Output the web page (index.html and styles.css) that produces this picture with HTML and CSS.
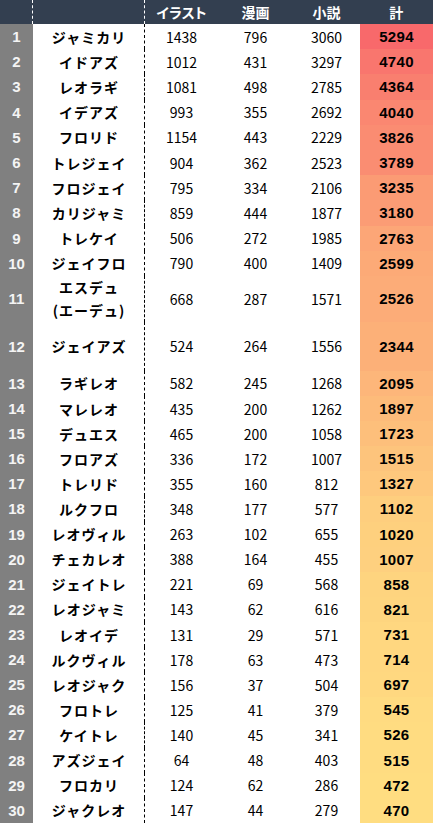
FILE: index.html
```html
<!DOCTYPE html>
<html lang="ja">
<head>
<meta charset="utf-8">
<title>ランキング</title>
<link rel="stylesheet" href="styles.css">
</head>
<body>
<div class="table">
  <div class="row head">
    <div class="c no"></div>
    <div class="c name"></div>
    <div class="c num palt">イラスト</div>
    <div class="c num">漫画</div>
    <div class="c num">小説</div>
    <div class="c tot">計</div>
  </div>
  <div class="row a"><div class="c no">1</div><div class="c name">ジャミカリ</div><div class="c num">1438</div><div class="c num">796</div><div class="c num">3060</div><div class="c tot" style="background:rgb(248,105,107)">5294</div></div>
  <div class="row a"><div class="c no">2</div><div class="c name">イドアズ</div><div class="c num">1012</div><div class="c num">431</div><div class="c num">3297</div><div class="c tot" style="background:rgb(249,118,110)">4740</div></div>
  <div class="row a"><div class="c no">3</div><div class="c name">レオラギ</div><div class="c num">1081</div><div class="c num">498</div><div class="c num">2785</div><div class="c tot" style="background:rgb(249,127,111)">4364</div></div>
  <div class="row a"><div class="c no">4</div><div class="c name">イデアズ</div><div class="c num">993</div><div class="c num">355</div><div class="c num">2692</div><div class="c tot" style="background:rgb(250,135,113)">4040</div></div>
  <div class="row a"><div class="c no">5</div><div class="c name">フロリド</div><div class="c num">1154</div><div class="c num">443</div><div class="c num">2229</div><div class="c tot" style="background:rgb(250,140,114)">3826</div></div>
  <div class="row a"><div class="c no">6</div><div class="c name">トレジェイ</div><div class="c num">904</div><div class="c num">362</div><div class="c num">2523</div><div class="c tot" style="background:rgb(250,141,114)">3789</div></div>
  <div class="row a"><div class="c no">7</div><div class="c name">フロジェイ</div><div class="c num">795</div><div class="c num">334</div><div class="c num">2106</div><div class="c tot" style="background:rgb(251,155,116)">3235</div></div>
  <div class="row a"><div class="c no">8</div><div class="c name">カリジャミ</div><div class="c num">859</div><div class="c num">444</div><div class="c num">1877</div><div class="c tot" style="background:rgb(251,156,117)">3180</div></div>
  <div class="row a"><div class="c no">9</div><div class="c name">トレケイ</div><div class="c num">506</div><div class="c num">272</div><div class="c num">1985</div><div class="c tot" style="background:rgb(252,166,119)">2763</div></div>
  <div class="row a"><div class="c no">10</div><div class="c name">ジェイフロ</div><div class="c num">790</div><div class="c num">400</div><div class="c num">1409</div><div class="c tot" style="background:rgb(252,170,119)">2599</div></div>
  <div class="row tall"><div class="c no">11</div><div class="c name two">エスデュ<br>(エーデュ)</div><div class="c num">668</div><div class="c num">287</div><div class="c num">1571</div><div class="c tot" style="background:rgb(252,172,120)">2526</div></div>
  <div class="row taller"><div class="c no">12</div><div class="c name">ジェイアズ</div><div class="c num">524</div><div class="c num">264</div><div class="c num">1556</div><div class="c tot" style="background:rgb(252,176,120)">2344</div></div>
  <div class="row b"><div class="c no">13</div><div class="c name">ラギレオ</div><div class="c num">582</div><div class="c num">245</div><div class="c num">1268</div><div class="c tot" style="background:rgb(253,182,122)">2095</div></div>
  <div class="row b"><div class="c no">14</div><div class="c name">マレレオ</div><div class="c num">435</div><div class="c num">200</div><div class="c num">1262</div><div class="c tot" style="background:rgb(253,187,122)">1897</div></div>
  <div class="row b"><div class="c no">15</div><div class="c name">デュエス</div><div class="c num">465</div><div class="c num">200</div><div class="c num">1058</div><div class="c tot" style="background:rgb(253,191,123)">1723</div></div>
  <div class="row b"><div class="c no">16</div><div class="c name">フロアズ</div><div class="c num">336</div><div class="c num">172</div><div class="c num">1007</div><div class="c tot" style="background:rgb(253,196,124)">1515</div></div>
  <div class="row b"><div class="c no">17</div><div class="c name">トレリド</div><div class="c num">355</div><div class="c num">160</div><div class="c num">812</div><div class="c tot" style="background:rgb(254,200,125)">1327</div></div>
  <div class="row b"><div class="c no">18</div><div class="c name">ルクフロ</div><div class="c num">348</div><div class="c num">177</div><div class="c num">577</div><div class="c tot" style="background:rgb(254,206,126)">1102</div></div>
  <div class="row b"><div class="c no">19</div><div class="c name">レオヴィル</div><div class="c num">263</div><div class="c num">102</div><div class="c num">655</div><div class="c tot" style="background:rgb(254,208,126)">1020</div></div>
  <div class="row b"><div class="c no">20</div><div class="c name">チェカレオ</div><div class="c num">388</div><div class="c num">164</div><div class="c num">455</div><div class="c tot" style="background:rgb(254,208,127)">1007</div></div>
  <div class="row b"><div class="c no">21</div><div class="c name">ジェイトレ</div><div class="c num">221</div><div class="c num">69</div><div class="c num">568</div><div class="c tot" style="background:rgb(254,212,127)">858</div></div>
  <div class="row b"><div class="c no">22</div><div class="c name">レオジャミ</div><div class="c num">143</div><div class="c num">62</div><div class="c num">616</div><div class="c tot" style="background:rgb(254,213,127)">821</div></div>
  <div class="row b"><div class="c no">23</div><div class="c name">レオイデ</div><div class="c num">131</div><div class="c num">29</div><div class="c num">571</div><div class="c tot" style="background:rgb(255,215,128)">731</div></div>
  <div class="row b"><div class="c no">24</div><div class="c name">ルクヴィル</div><div class="c num">178</div><div class="c num">63</div><div class="c num">473</div><div class="c tot" style="background:rgb(255,215,128)">714</div></div>
  <div class="row b"><div class="c no">25</div><div class="c name">レオジャク</div><div class="c num">156</div><div class="c num">37</div><div class="c num">504</div><div class="c tot" style="background:rgb(255,216,128)">697</div></div>
  <div class="row b"><div class="c no">26</div><div class="c name">フロトレ</div><div class="c num">125</div><div class="c num">41</div><div class="c num">379</div><div class="c tot" style="background:rgb(255,219,129)">545</div></div>
  <div class="row b"><div class="c no">27</div><div class="c name">ケイトレ</div><div class="c num">140</div><div class="c num">45</div><div class="c num">341</div><div class="c tot" style="background:rgb(255,220,129)">526</div></div>
  <div class="row b"><div class="c no">28</div><div class="c name">アズジェイ</div><div class="c num">64</div><div class="c num">48</div><div class="c num">403</div><div class="c tot" style="background:rgb(255,220,129)">515</div></div>
  <div class="row b"><div class="c no">29</div><div class="c name">フロカリ</div><div class="c num">124</div><div class="c num">62</div><div class="c num">286</div><div class="c tot" style="background:rgb(255,221,129)">472</div></div>
  <div class="row b"><div class="c no">30</div><div class="c name">ジャクレオ</div><div class="c num">147</div><div class="c num">44</div><div class="c num">279</div><div class="c tot" style="background:rgb(255,221,129)">470</div></div>
</div>
</body>
</html>
```
FILE: styles.css
```css
html, body {
  margin: 0;
  padding: 0;
  background: #ffffff;
}
body {
  width: 433px;
  height: 823px;
  overflow: hidden;
  font-family: "Noto Sans CJK JP", "Noto Sans", sans-serif;
  color: #000;
}
.table {
  display: flex;
  flex-direction: column;
  width: 433px;
}
.row {
  display: grid;
  grid-template-columns: 33px 112px 73px 75px 67px 73px;
}
.row.head { height: 24px; background: #333f50; }
.row.a { height: 25.2px; }
.row.tall { height: 46px; }
.row.taller { height: 49px; }
.row.b { height: 25.11px; }

.c {
  display: flex;
  align-items: center;
  justify-content: center;
  box-sizing: border-box;
  white-space: nowrap;
}
.no {
  background: #808080;
  color: #f4f4f4;
  font-family: "Liberation Sans", Arial, sans-serif;
  font-weight: 700;
  font-size: 15px;
}
.name {
  border-right: 1px dashed #000;
  font-weight: 700;
  font-size: 14px;
  letter-spacing: 1px;
  padding-left: 1px;
}
.name.two {
  flex-direction: column;
  line-height: 23px;
  text-align: center;
}
.num {
  font-size: 14px;
  font-weight: 400;
}
.tot {
  font-family: "Liberation Sans", Arial, sans-serif;
  font-weight: 700;
  font-size: 15px;
  letter-spacing: 0.3px;
}
.head .c {
  color: #fff;
  font-family: "Noto Sans CJK JP", "Noto Sans", sans-serif;
  font-weight: 700;
  font-size: 14px;
  background: #333f50;
}
.head .no { border-right: 1px dashed #fff; }
.head .name { border-right: 1px dashed #fff; }
.palt { font-feature-settings: "palt"; }
```
